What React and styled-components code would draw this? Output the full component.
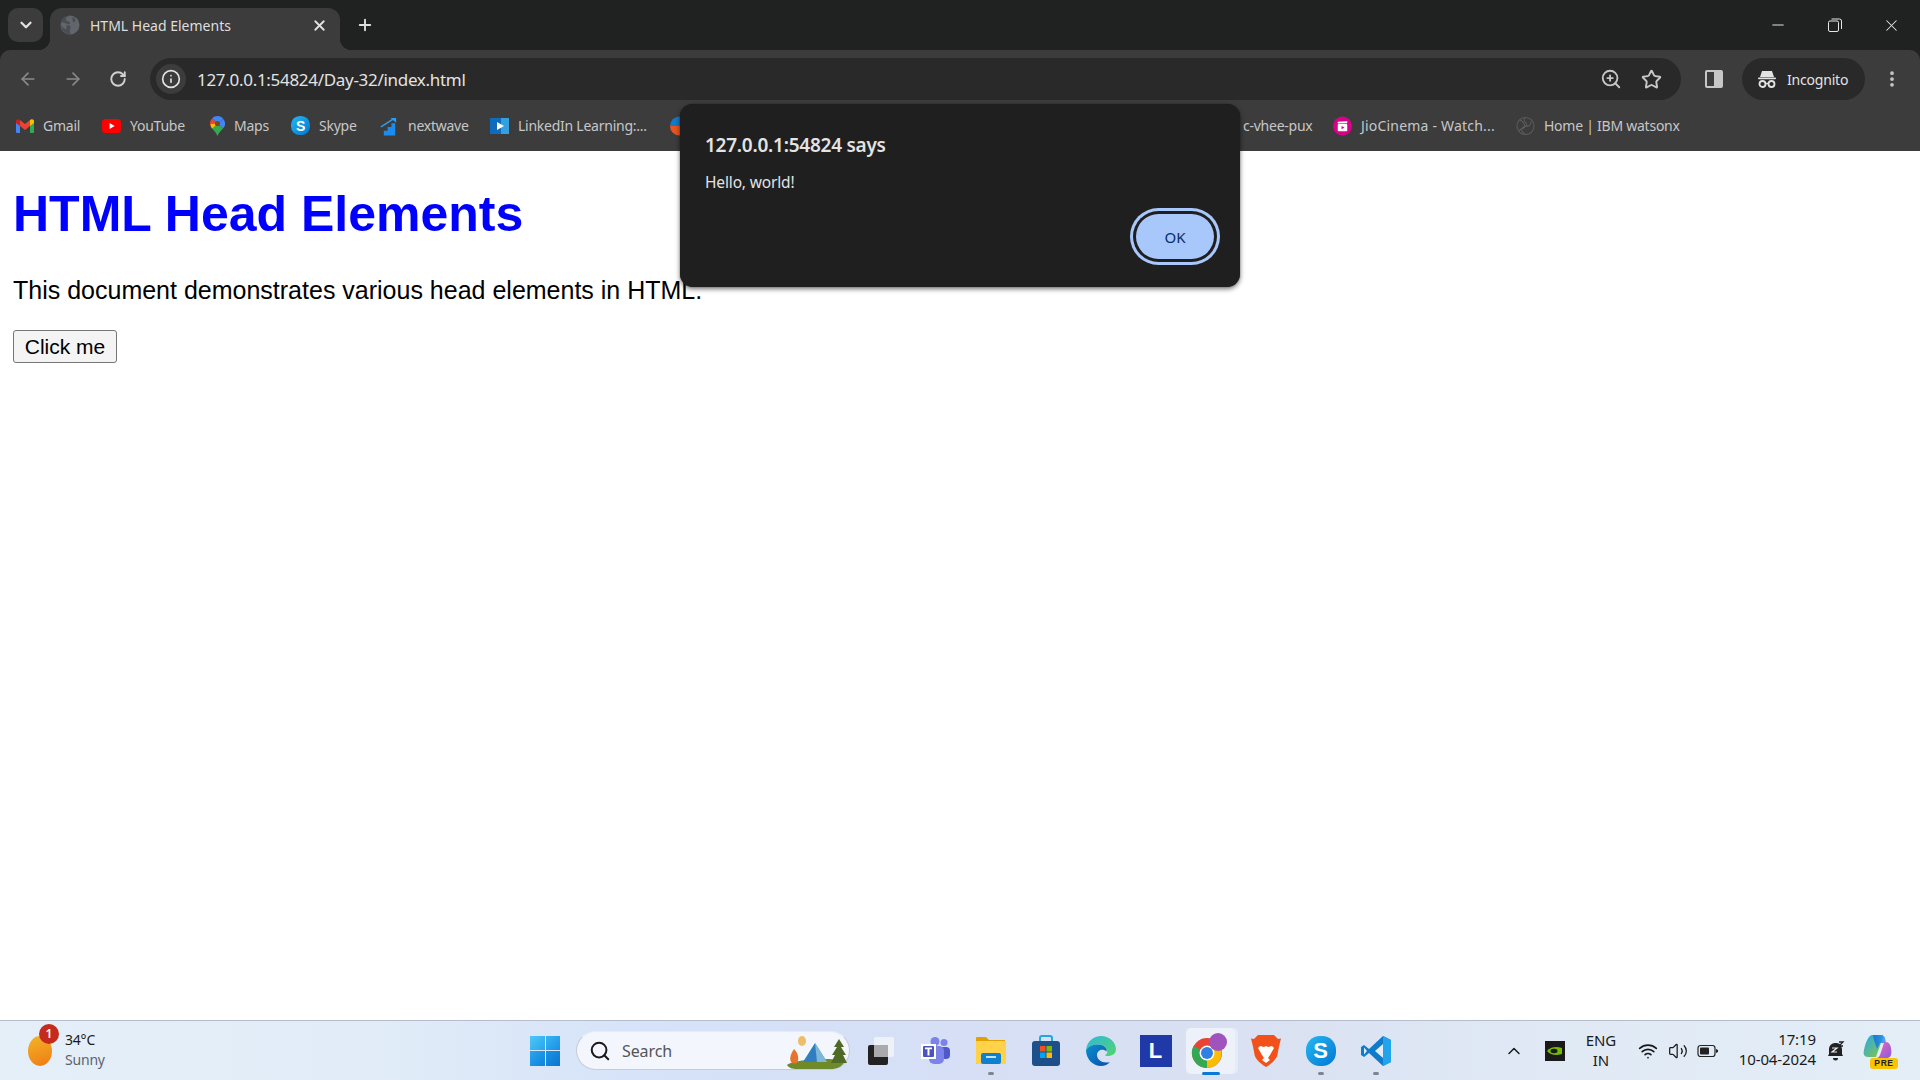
import React from "react";
import styled, { createGlobalStyle } from "styled-components";
import { ChevronDown, X, Plus, ArrowLeft, ArrowRight, RotateCw, Info, ZoomIn, Star, MoreVertical, Minus, Search, ChevronUp, Wifi, Volume2 } from "lucide-react";

const UI = `"Noto Sans", "Open Sans", sans-serif`;

const Global = createGlobalStyle`
  html, body { margin: 0; padding: 0; height: 100%; overflow: hidden; background: #fff; }
  #root { height: 100%; }
`;
const Screen = styled.div`
  position: relative; display: flex; flex-direction: column; height: 1080px; width: 1920px; font-family: ${UI};
`;
const BrowserFrame = styled.header`
  flex: none; background: #202222;
`;
const TabStrip = styled.div`
  display: flex; align-items: flex-end; height: 50px; background: #202222; padding-left: 8px; flex: none;
`;
const TabList = styled.div`
  width: 35px; height: 34px; margin-bottom: 8px; border-radius: 10px; background: #3c3c3c; color: #e3e3e3;
  display: flex; align-items: center; justify-content: center;
`;
const Tab = styled.div`
  position: relative; width: 290px; height: 42px; margin-left: 7px; background: #3c3c3c; border-radius: 12px 12px 0 0;
  display: flex; align-items: center; padding: 0 12px 8px 10px; box-sizing: border-box; color: #e3e3e3;
  &::before, &::after { content: ""; position: absolute; bottom: 0; width: 12px; height: 12px; }
  &::before { left: -12px; background: radial-gradient(circle at 0 0, transparent 12px, #3c3c3c 12.5px); }
  &::after { right: -12px; background: radial-gradient(circle at 100% 0, transparent 12px, #3c3c3c 12.5px); }
`;
const TabTitle = styled.span`
  flex: 1; margin-left: 10px; font-size: 14px; letter-spacing: 0; white-space: nowrap; color: #dedede;
`;
const NewTab = styled.div`
  margin: 0 0 10px 16px; height: 30px; color: #dfdfdf; display: flex; align-items: center;
`;
const WindowControls = styled.div`
  margin-left: auto; display: flex; align-self: flex-start; height: 50px; align-items: center; color: #e6e6e6;
`;
const WindowBtn = styled.div`
  width: 57px; display: flex; justify-content: center; align-items: center; height: 48px;
`;
const Toolbar = styled.div`
  height: 52px; box-sizing: border-box; background: #3c3c3c; display: flex; align-items: center; flex: none; padding: 6px 0 0 5px; border-radius: 10px 10px 0 0;
`;
const NavBtn = styled.div`
  width: 45px; display: flex; justify-content: center; color: ${p => (p.$dim ? "#8a8a8a" : "#d0d0d0")};
`;
const Omnibox = styled.div`
  margin-left: 10px; width: 1531px; height: 42px; border-radius: 21px; background: #292929; display: flex; align-items: center; padding: 0 10px 0 6px; box-sizing: border-box;
`;
const InfoChip = styled.div`
  width: 30px; height: 30px; border-radius: 50%; background: #3c3c3c; color: #e3e3e3; display: flex; align-items: center; justify-content: center;
`;
const Url = styled.span`
  flex: 1; margin-left: 11px; font-size: 17px; letter-spacing: -0.3px; color: #e3e3e3;
`;
const OmniIcon = styled.div`
  width: 40px; display: flex; justify-content: center; color: #c7c7c7;
`;
const SidePanel = styled.div`
  margin-left: 24px; width: 18px; height: 18px; border: 2px solid #c7c7c7; border-radius: 2px; background: linear-gradient(90deg, transparent 50%, #c7c7c7 50%); box-sizing: border-box;
`;
const Incognito = styled.div`
  margin-left: 19px; width: 123px; height: 42px; border-radius: 21px; background: #292929; color: #e3e3e3; display: flex; align-items: center; padding-left: 15px; box-sizing: border-box; font-size: 14px; gap: 10px; letter-spacing: -0.2px;
`;
const Kebab = styled.div`
  margin-left: 17px; color: #c7c7c7; display: flex;
`;
const BookmarkBar = styled.div`
  height: 49px; background: #3c3c3c; display: flex; align-items: center; flex: none; padding-bottom: 2px; box-sizing: border-box; padding-left: 15px;
`;
const Bookmark = styled.div`
  display: flex; align-items: center; gap: 9px; width: ${p => p.$w}px; flex: none; font-size: 14px; letter-spacing: ${p => p.$sp ?? -0.25}px; color: #c7c7c7; white-space: nowrap;
`;
const FavIcon = styled.span`
  width: ${p => p.$w || 19}px; height: 20px; display: flex; align-items: center; justify-content: center; flex: none;
`;
const SkypeBadge = styled.span`
  width: ${p => p.$s}px; height: ${p => p.$s}px; border-radius: 46%; background: linear-gradient(135deg, #27b7f0, #0078d4); color: #fff; font: 700 ${p => Math.round(p.$s * 0.72)}px "Liberation Sans", sans-serif; display: flex; align-items: center; justify-content: center;
`;
const HiddenGap = styled.div`
  width: ${p => p.$w}px; flex: none;
`;
const Viewport = styled.main`
  flex: 1; background: #fff; padding: 34px 13px 0; font-family: "Liberation Sans", Arial, sans-serif; color: #000; min-height: 0;
`;
const Heading = styled.h1`
  margin: 0; color: #0000ff; font-size: 50px; line-height: 58px; font-weight: 700;
`;
const Para = styled.p`
  margin: 33px 0 0; font-size: 25px; line-height: 29px;
`;
const PageButton = styled.button`
  display: block; margin-top: 25px; width: 104px; height: 33px; padding: 0; font: 21px "Liberation Sans", Arial, sans-serif; color: #000; background: #f4f4f4; border: 1px solid #767676; border-radius: 3px;
`;
const Dialog = styled.div`
  position: absolute; left: 680px; top: 104px; width: 560px; height: 183px; box-sizing: border-box; background: #1f1f1f; border-radius: 13px; box-shadow: 0 2px 5px rgba(0,0,0,.55), 0 0 1px rgba(0,0,0,.6); padding: 28px 25px 0; color: #e3e3e3;
  display: flex; flex-direction: column;
`;
const DialogTitle = styled.div`
  font-size: 19px; line-height: 26px; font-weight: 600; letter-spacing: -0.25px;
`;
const DialogBody = styled.div`
  margin-top: 14px; font-size: 15.5px; line-height: 21px; letter-spacing: -0.15px;
`;
const DialogActions = styled.div`
  margin: 21px 1px 0 0; display: flex; justify-content: flex-end;
`;
const OkButton = styled.button`
  width: 78px; height: 45px; border: 0; border-radius: 23px; background: #a8c7fa; color: #062e6f; font: 400 15px ${UI}; box-shadow: 0 0 0 3px #1f1f1f, 0 0 0 6px #a8c7fa; margin: 0; padding: 0;
`;
const Taskbar = styled.footer`
  height: 60px; flex: none; box-sizing: border-box; border-top: 1px solid #b5bdcc; display: flex; align-items: center;
  background: linear-gradient(90deg, #e4eff8 0%, #e1ecf8 20%, #d5e2f8 35%, #d6dff5 50%, #d9e1f2 65%, #dfe8f4 78%, #e4eef7 100%);
  color: #1a1a1a;
`;
const Weather = styled.div`
  width: 530px; flex: none; display: flex; align-items: center; padding-left: 28px; box-sizing: border-box; position: relative;
`;
const Sun = styled.div`
  position: relative; width: 24px; height: 30px; border-radius: 50%; background: linear-gradient(160deg, #f2b62a, #f07a12);
`;
const Badge = styled.div`
  position: absolute; top: -12px; left: 11px; width: 20px; height: 20px; border-radius: 50%; background: #c42b1c; color: #fff; font-size: 12px; font-weight: 600; display: flex; align-items: center; justify-content: center;
`;
const WeatherText = styled.div`
  margin: 0 0 2px 13px; font-size: 14px; line-height: 20px; letter-spacing: -0.2px;
`;
const Muted = styled.div`
  color: #5d6470;
`;
const WinLogo = styled.div`
  width: 30px; height: 30px; display: grid; grid-template-columns: 1fr 1fr; gap: 1px; flex: none;
`;
const WinPane = styled.span`
  background: linear-gradient(135deg, ${p => p.$a}, ${p => p.$b});
`;
const SearchPill = styled.div`
  margin-left: 16px; width: 274px; height: 39px; flex: none; box-sizing: border-box; border-radius: 20px; background: #f3f6fd; border: 1px solid #c5cbd9; border-top-color: #e6ebf6; display: flex; align-items: center; padding-left: 12px; font-size: 16px; color: #555; position: relative; overflow: visible;
`;
const SearchText = styled.span`
  margin-left: 11px; letter-spacing: -0.1px;
`;
const Scene = styled.div`
  position: absolute; right: 2px; top: 3px; width: 62px; height: 34px;
`;
const Slots = styled.div`
  display: flex; margin-left: 3px;
`;
const Slot = styled.div`
  position: relative; width: 55px; height: 58px; flex: none; display: flex; align-items: center; justify-content: center;
  ${p => p.$active && `&::before { content: ""; position: absolute; left: 3px; right: 3px; top: 6px; bottom: 6px; background: rgba(255,255,255,.55); border-radius: 5px; box-shadow: 3px 0 0 rgba(255,255,255,.35); }`}
  & > svg, & > span { position: relative; }
`;
const Indicator = styled.i`
  position: absolute; bottom: 5px; left: 50%; transform: translateX(-50%); height: 3px; border-radius: 2px; width: ${p => (p.$active ? 18 : 6)}px; background: ${p => (p.$active ? "#0a78d4" : "#7d8590")};
`;
const Tray = styled.div`
  flex: 1; display: flex; align-items: center; height: 100%; padding-left: 99px; box-sizing: border-box; color: #1a1a1a;
`;
const Chevron = styled.div`
  width: 24px; display: flex; justify-content: center;
`;
const Lang = styled.div`
  margin: 0 0 2px 13px; width: 36px; text-align: center; font-size: 15px; line-height: 20px; letter-spacing: -0.1px;
`;
const TrayIcon = styled.div`
  display: flex; justify-content: center; width: 30px; margin-left: ${p => p.$ml || 0}px;
`;
const Clock = styled.div`
  width: 93px; margin-bottom: 3px; text-align: right; font-size: 15px; line-height: 20px; letter-spacing: -0.1px;
`;
const BellBox = styled.div`
  margin-left: 9px; width: 22px; display: flex; justify-content: center;
`;
const CopilotBox = styled.div`
  margin-left: 16px; position: relative; width: 34px; height: 34px;
`;
const PreTag = styled.span`
  position: absolute; left: 7px; bottom: -1px; width: 28px; height: 11px; background: #f9c400; border-radius: 3px; color: #222; font: 700 8.5px/11px "Liberation Sans", sans-serif; text-align: center; letter-spacing: .6px;
`;

const TabGlobe = () => (
  <svg width="20" height="20" viewBox="0 0 20 20"><circle cx="10" cy="10" r="9.500" fill="#62666c"/><path d="M10 .5C7 2 5 3 6 5c1 2 4 1 4 3s-3 1-5 0C3 7 1.500 7 .8 8c0 3 2 5 4.200 6 1 .5 2-1 1.500-2.500-.3-1.500 1.500-1.500 3-1 1.500.5 1 2.500.5 4-.5 2 0 3.500 1 4.900C8 19.800 5 18 3 15.500.5 12-.5 6 3.500 3 5.500 1.500 8 .5 10 .5z" fill="#4a4d52"/><path d="M13 2c2 1 3 3 2 4.500S12.500 7 12.500 5 12 2.500 13 2z" fill="#4a4d52"/></svg>
);
const Gmail = () => (
  <svg width="18" height="14" viewBox="0 0 18 14"><path d="M0 3v10a1 1 0 001 1h3V6z" fill="#4285f4"/><path d="M18 3v10a1 1 0 01-1 1h-3V6z" fill="#34a853"/><path d="M14 1v6l4-3V2c0-1.600-2-2.400-3-1.400z" fill="#fbbc04"/><path d="M4 7V1l5 4 5-4v6L9 11z" fill="#ea4335"/><path d="M0 2v2l4 3V1L3 .6C2 -.4 0 .4 0 2z" fill="#c5221f"/></svg>
);
const YouTube = () => (
  <svg width="19" height="14" viewBox="0 0 19 14"><rect width="19" height="14" rx="3.500" fill="#f00"/><path d="M7.600 4l5 3-5 3z" fill="#fff"/></svg>
);
const Maps = () => (
  <svg width="15" height="20" viewBox="0 0 15 20"><path d="M2.200 2.200A7.500 7.500 0 002 12.500L7.500 7.500z" fill="#ea4335"/><path d="M7.500 0C10 0 12 1 13.300 3L7.500 7.500 2.200 2.200C3.500.8 5.500 0 7.500 0z" fill="#4285f4"/><path d="M13.300 3A7.500 7.500 0 0113 12.500L7.500 7.500z" fill="#4285f4"/><path d="M2 12.500C4 15 6.500 17 7.500 20 8.500 17 11 15 13 12.500L7.500 7.500z" fill="#34a853"/><path d="M2 12.500C1 11 .5 9.500.5 8L7.500 7.500 4 11z" fill="#fbbc04"/><circle cx="7.500" cy="7.500" r="2.600" fill="#7a4a1a"/></svg>
);
const Nextwave = () => (
  <svg width="20" height="20" viewBox="0 0 20 20"><path d="M1 20v-5h4v-4h4V7h4v13z" fill="#1a8cf0" transform="translate(3 0)"/><path d="M1 11L15 2" stroke="#2a9df4" strokeWidth="1.600"/><path d="M11 1.500h6v5z" fill="#2a9df4"/></svg>
);
const Learning = () => (
  <svg width="19" height="16" viewBox="0 0 19 16"><rect width="19" height="16" fill="#0f6cbd"/><rect x="11" width="8" height="16" fill="#35a0e0"/><path d="M7 4l7 4-7 4z" fill="#fff"/></svg>
);
const HalfCircle = () => (
  <svg width="20" height="20" viewBox="0 0 20 20"><path d="M0 10a10 10 0 0120 0z" fill="#1479c9"/><path d="M0 10a10 10 0 0020 0z" fill="#e8551f"/></svg>
);
const Jio = () => (
  <svg width="20" height="20" viewBox="0 0 20 20"><circle cx="10" cy="10" r="10" fill="#d9008c"/><rect x="5" y="8" width="10" height="7.500" rx="1" fill="#fff"/><path d="M5 5.500l10-.5v2l-10 .3z" fill="#fff"/><path d="M9 10l3 1.700-3 1.700z" fill="#d9008c"/></svg>
);
const Ibm = () => (
  <svg width="20" height="20" viewBox="0 0 20 20" fill="none" stroke="#5c5c5c" strokeWidth="1.100"><circle cx="10" cy="10" r="9"/><path d="M10 1c-5 4 5 7 0 9s-6 5 0 9M4 4c4 0 4 5 6 6s6 0 6-5M3 15c3-3 5-1 7-5"/></svg>
);

const Teams = () => (
  <svg width="32" height="32" viewBox="0 0 32 32"><circle cx="24" cy="7.500" r="3.500" fill="#7b83eb"/><rect x="19" y="12" width="11" height="12" rx="4" fill="#5059c9"/><circle cx="15" cy="6.500" r="4.500" fill="#7b83eb"/><rect x="9" y="11" width="15" height="18" rx="5" fill="#7b83eb"/><rect x="1" y="9" width="15" height="15" fill="#fff"/><rect x="3" y="11" width="11" height="11" rx="1" fill="#4b53bc"/><path d="M5 12.500h7v1.800H9.500V20.500h-2v-6.200H5z" fill="#fff"/></svg>
);
const TaskView = () => (
  <svg width="32" height="32" viewBox="0 0 32 32"><rect x="3" y="10" width="20" height="20" rx="2" fill="#222"/><rect x="9" y="2" width="20" height="20" rx="2" fill="#f2f4f8" opacity=".85"/><rect x="9" y="10" width="14" height="12" fill="#aaaaaa"/></svg>
);
const Folder = () => (
  <svg width="32" height="32" viewBox="0 0 32 32"><path d="M1 3a1 1 0 011-1h9l3 3h16v24H1z" fill="#e4a000"/><rect x="1" y="6" width="30" height="23" rx="1" fill="#ffd24a"/><rect x="6" y="18" width="20" height="11" rx="2" fill="#0f7fd0"/><rect x="11" y="21" width="10" height="2" fill="#bfe3fb"/></svg>
);
const Store = () => (
  <svg width="32" height="32" viewBox="0 0 32 32"><path d="M10 7V3a2 2 0 012-2h8a2 2 0 012 2v4" fill="none" stroke="#22a7e0" strokeWidth="2"/><rect x="2" y="6" width="28" height="25" rx="3" fill="#1d4f8a"/><rect x="10" y="11" width="5.500" height="5.500" fill="#f25022"/><rect x="16.500" y="11" width="5.500" height="5.500" fill="#7fba00"/><rect x="10" y="17.500" width="5.500" height="5.500" fill="#00a4ef"/><rect x="16.500" y="17.500" width="5.500" height="5.500" fill="#ffb900"/></svg>
);
const Edge = () => (
  <svg width="32" height="32" viewBox="0 0 32 32"><defs><linearGradient id="eg" x1="0" y1="0" x2="1" y2="1"><stop offset="0" stopColor="#2fb8dc"/><stop offset="1" stopColor="#52d66a"/></linearGradient><linearGradient id="eb" x1="0" y1="0" x2="1" y2="1"><stop offset="0" stopColor="#0a8fd0"/><stop offset="1" stopColor="#0b4fa8"/></linearGradient></defs><path d="M1 15C2 6 9 1 16 1c9 0 15 7 15 13 0 5-4 7-8 7-2 0-3-.5-3-1 3-1 3-5 0-8-5-4-15-3-19 3z" fill="url(#eg)"/><path d="M1 15c4-6 14-7 19-3 1.500 1.500 2 3 1.500 4.500C18 13 12 15 12 20c0 5 6 9 13 7-3 3-6 4-9 4C8 31 1 24 1 15z" fill="url(#eb)"/></svg>
);
const Lbox = styled.span`
  width: 32px; height: 32px; background: #1f3aa8; color: #fff; font: 700 22px "Liberation Sans", sans-serif; display: flex; align-items: center; justify-content: center;
`;
const Chrome = () => (
  <svg width="42" height="38" viewBox="-2 0 42 38"><circle cx="19" cy="21" r="15" fill="#ea4335"/><path d="M19 21L6 28.500A15 15 0 0019 36z" fill="#34a853"/><path d="M19 21v15a15 15 0 0013-22z" fill="#fbbc04"/><path d="M5.500 14L19 21 6 28.500A15 15 0 015.500 14z" fill="#34a853"/><circle cx="19" cy="21" r="7.500" fill="#fff"/><circle cx="19" cy="21" r="6" fill="#2f7fe6"/><circle cx="30" cy="10" r="9" fill="#a052bd"/></svg>
);
const ChromeP = styled.span`
  position: absolute; color: #e9d4f2; font-size: 11px; font-weight: 600; top: 11px; left: 35px;
`;
const Brave = () => (
  <svg width="30" height="34" viewBox="0 0 30 34"><path d="M7 1h16l4 4 3-.5-2 8-1.500 8C26 25 19 31 15 33 11 31 4 25 3.500 20.500L2 12.500 0 4.500 3 5z" fill="#f2511b"/><path d="M9 12l4 1 2-1 2 1 4-1 2 2-4 7-2 3 2 2-4 3-4-3 2-2-2-3-4-7z" fill="#fff"/></svg>
);
const VSCode = () => (
  <svg width="32" height="32" viewBox="0 0 32 32"><path d="M23 1l8 4v22l-8 4L9 18l-5 4-3-2v-8l3-2 5 4z" fill="#0e7ccb"/><path d="M23 1l8 4v22l-8 4z" fill="#22a4ec"/><path d="M23 9v14l-8-7z" fill="#e2ecfa"/><path d="M4 12.500L7 16l-3 3.500z" fill="#e2ecfa"/></svg>
);
const Camp = () => (
  <svg width="62" height="34" viewBox="0 0 62 34"><path d="M2 30c6-6 50-8 58-4-3 6-8 8-14 8H12C7 34 4 33 2 30z" fill="#6f8a2a"/><ellipse cx="17" cy="6" rx="4" ry="5" fill="#eebd6a"/><path d="M30 8L18 27h24z" fill="#2f7fc0"/><path d="M30 8l2 19h10z" fill="#7fb7d8"/><path d="M54 4l-5 8 3 0-5 8 3 0-4 8h16l-4-8 3 0-5-8 3 0z" fill="#4e6a24"/><path d="M9 14c3 3 5 7 4 12 0 2-3 3-6 2-3-3-2-8 2-14z" fill="#e8732a"/></svg>
);
const Nvidia = () => (
  <svg width="20" height="20" viewBox="0 0 20 20"><rect width="20" height="20" fill="#1a1a1a"/><path d="M2 10c3-4 9-5 15-3v6c-6 2-12 1-15-3z" fill="#76b900"/><ellipse cx="9" cy="10" rx="3.500" ry="2.200" fill="#1a1a1a"/></svg>
);
const Battery = () => (
  <svg width="22" height="14" viewBox="0 0 22 14"><rect x="1" y="1.500" width="17" height="11" rx="2.500" fill="none" stroke="#222" strokeWidth="1.200"/><rect x="3" y="3.500" width="9" height="7" rx="1" fill="#222"/><path d="M19 5l2 1v2l-2 1z" fill="#222"/></svg>
);
const Bell = () => (
  <svg width="18" height="20" viewBox="0 0 18 20"><path d="M8 2a6 6 0 00-6 6v5l-1 2h15l-1-2V8a6 6 0 00-7-6z" fill="#222"/><path d="M6 17h5a2.500 2.500 0 01-5 0z" fill="#222"/><path d="M5 7h5l-5 4h5" stroke="#e6eef7" strokeWidth="1.200" fill="none"/><path d="M12 1h4l-4 4h4" stroke="#222" strokeWidth="1.300" fill="none"/></svg>
);
const Copilot = () => (
  <svg width="30" height="26" viewBox="0 0 30 26"><defs><linearGradient id="c1" x1="0" y1="0" x2="1" y2="1"><stop offset="0" stopColor="#22a8ee"/><stop offset="1" stopColor="#8cc63f"/></linearGradient><linearGradient id="c2" x1="0" y1="0" x2="1" y2="1"><stop offset="0" stopColor="#f06ab0"/><stop offset="1" stopColor="#8a5ae0"/></linearGradient><linearGradient id="c3" x1="0" y1="0" x2="1" y2="0"><stop offset="0" stopColor="#0f6cd8"/><stop offset="1" stopColor="#2a9df4"/></linearGradient></defs><path d="M9 1h10c1 0 1 1 1 2L13 23H5C1 23 0 20 1 16 2 11 5 1 9 1z" fill="url(#c1)"/><path d="M10 1h8c2 0 3 1 4 3l1 5h-6l-3 6-3-9z" fill="url(#c3)" opacity=".85"/><path d="M22 8c3 0 5 1 6 6 1 6 0 10-4 10H13c2 0 3-1 4-3l3-9c.500-2 1-4 2-4z" fill="url(#c2)"/></svg>
);
const Restore = () => (
  <svg width="14" height="14" viewBox="0 0 14 14" fill="none" stroke="#e6e6e6" strokeWidth="1"><rect x=".5" y="3" width="10" height="10.500" rx="1.500"/><path d="M3.500 1h8a2 2 0 012 2v8"/></svg>
);
const Spy = () => (
  <svg width="20" height="18" viewBox="0 0 20 18" fill="#e3e3e3"><path d="M5 1h10l2 6H3z"/><rect x="1" y="7.500" width="18" height="1.800" rx=".8"/><circle cx="5.500" cy="14" r="3" fill="none" stroke="#e3e3e3" strokeWidth="1.800"/><circle cx="14.500" cy="14" r="3" fill="none" stroke="#e3e3e3" strokeWidth="1.800"/><path d="M8 13.500h4" stroke="#e3e3e3" strokeWidth="1.500"/></svg>
);

const bookmarks = [
  { w: 87, icon: <Gmail />, iw: 19, t: "Gmail" },
  { w: 107, icon: <YouTube />, iw: 19, t: "YouTube" },
  { w: 82, icon: <Maps />, iw: 16, t: "Maps" },
  { w: 89, icon: <SkypeBadge $s={19}>S</SkypeBadge>, iw: 19, t: "Skype" },
  { w: 110, icon: <Nextwave />, iw: 19, t: "nextwave" },
  { w: 180, icon: <Learning />, iw: 19, t: "LinkedIn Learning:..." },
];
const tasks = [
  { icon: <TaskView /> },
  { icon: <Teams /> },
  { icon: <Folder />, run: true },
  { icon: <Store /> },
  { icon: <Edge /> },
  { icon: <Lbox>L</Lbox> },
  { icon: <Chrome />, active: true },
  { icon: <Brave /> },
  { icon: <SkypeBadge $s={30}>S</SkypeBadge>, run: true },
  { icon: <VSCode />, run: true },
];

export default function App() {
  return (
    <Screen>
      <Global />
      <BrowserFrame>
        <TabStrip>
          <TabList><ChevronDown size={18} strokeWidth={3} /></TabList>
          <Tab>
            <TabGlobe />
            <TabTitle>HTML Head Elements</TabTitle>
            <X size={17} strokeWidth={2.5} />
          </Tab>
          <NewTab><Plus size={18} strokeWidth={2.5} /></NewTab>
          <WindowControls>
            <WindowBtn><Minus size={18} strokeWidth={1.3} /></WindowBtn>
            <WindowBtn><Restore /></WindowBtn>
            <WindowBtn><X size={19} strokeWidth={1.3} /></WindowBtn>
          </WindowControls>
        </TabStrip>
        <Toolbar>
          <NavBtn $dim><ArrowLeft size={20} /></NavBtn>
          <NavBtn $dim><ArrowRight size={20} /></NavBtn>
          <NavBtn><RotateCw size={18} strokeWidth={2.5} /></NavBtn>
          <Omnibox>
            <InfoChip><Info size={20} /></InfoChip>
            <Url>127.0.0.1:54824/Day-32/index.html</Url>
            <OmniIcon><ZoomIn size={22} /></OmniIcon>
            <OmniIcon><Star size={21} strokeWidth={2.2} /></OmniIcon>
          </Omnibox>
          <SidePanel />
          <Incognito><Spy />Incognito</Incognito>
          <Kebab><MoreVertical size={20} strokeWidth={2.5} /></Kebab>
        </Toolbar>
        <BookmarkBar>
          {bookmarks.map(b => (
            <Bookmark key={b.t} $w={b.w}><FavIcon $w={b.iw}>{b.icon}</FavIcon>{b.t}</Bookmark>
          ))}
          <Bookmark $w={20}><FavIcon><HalfCircle /></FavIcon></Bookmark>
          <HiddenGap $w={553} />
          <Bookmark $w={90}>c-vhee-pux</Bookmark>
          <Bookmark $w={183} $sp={0.2}><FavIcon><Jio /></FavIcon>JioCinema - Watch...</Bookmark>
          <Bookmark $w={170}><FavIcon><Ibm /></FavIcon>Home | IBM watsonx</Bookmark>
        </BookmarkBar>
      </BrowserFrame>
      <Viewport>
        <Heading>HTML Head Elements</Heading>
        <Para>This document demonstrates various head elements in HTML.</Para>
        <PageButton>Click me</PageButton>
      </Viewport>
      <Dialog>
        <DialogTitle>127.0.0.1:54824 says</DialogTitle>
        <DialogBody>Hello, world!</DialogBody>
        <DialogActions><OkButton>OK</OkButton></DialogActions>
      </Dialog>
      <Taskbar>
        <Weather>
          <Sun><Badge>1</Badge></Sun>
          <WeatherText>34°C<Muted>Sunny</Muted></WeatherText>
        </Weather>
        <WinLogo>
          <WinPane $a="#4fc8f8" $b="#28a4ec" />
          <WinPane $a="#38b4f2" $b="#1a90e4" />
          <WinPane $a="#2aa6ec" $b="#0e82dc" />
          <WinPane $a="#1c94e4" $b="#0a74d0" />
        </WinLogo>
        <SearchPill>
          <Search size={22} strokeWidth={2.2} color="#1a1a1a" />
          <SearchText>Search</SearchText>
          <Scene><Camp /></Scene>
        </SearchPill>
        <Slots>
          {tasks.map((t, i) => (
            <Slot key={i} $active={t.active}>
              {t.icon}
              {t.active && <ChromeP>P</ChromeP>}
              {(t.run || t.active) && <Indicator $active={t.active} />}
            </Slot>
          ))}
        </Slots>
        <Tray>
          <Chevron><ChevronUp size={20} strokeWidth={1.8} /></Chevron>
          <TrayIcon $ml={14}><Nvidia /></TrayIcon>
          <Lang>ENG<br />IN</Lang>
          <TrayIcon $ml={14}><Wifi size={20} /></TrayIcon>
          <TrayIcon><Volume2 size={20} strokeWidth={1.5} /></TrayIcon>
          <TrayIcon><Battery /></TrayIcon>
          <Clock>17:19<br />10-04-2024</Clock>
          <BellBox><Bell /></BellBox>
          <CopilotBox><Copilot /><PreTag>PRE</PreTag></CopilotBox>
        </Tray>
      </Taskbar>
    </Screen>
  );
}
